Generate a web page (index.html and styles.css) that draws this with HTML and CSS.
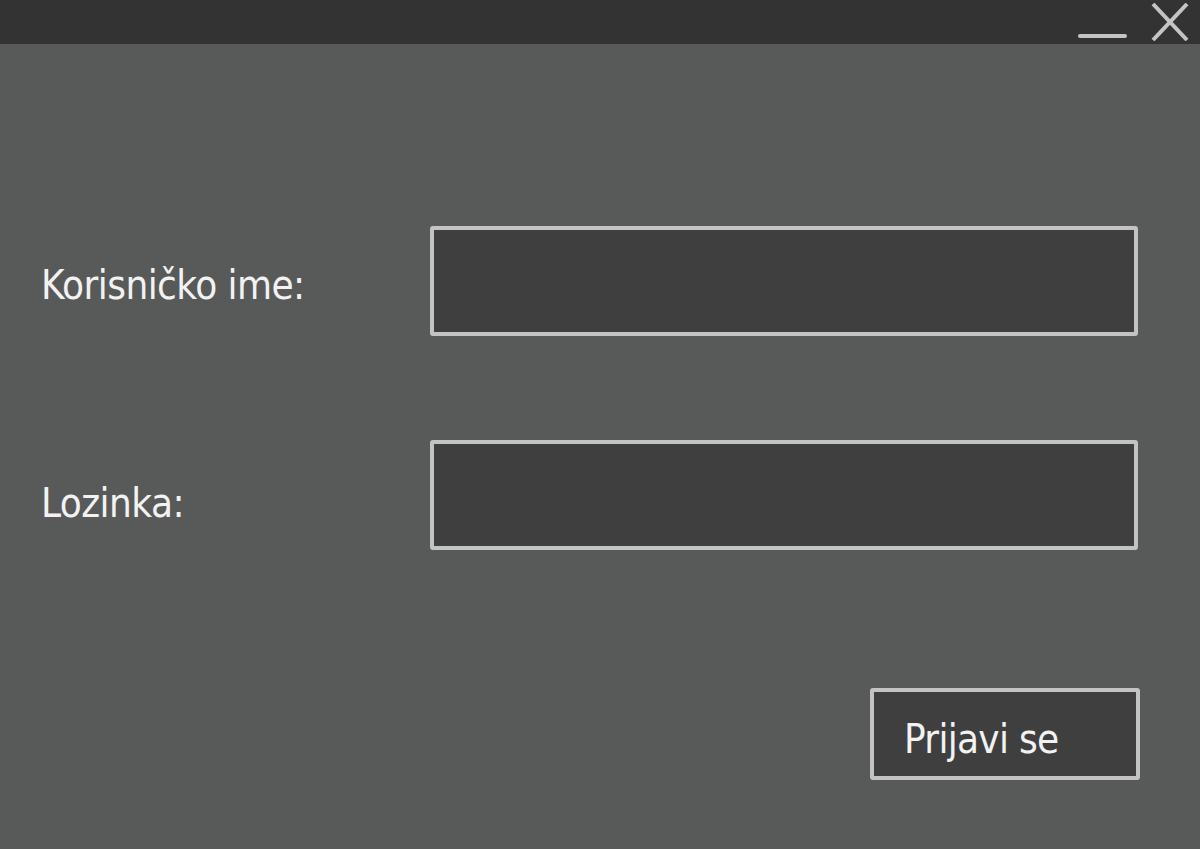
FILE: index.html
```html
<!DOCTYPE html>
<html lang="hr">
<head>
<meta charset="utf-8">
<title>Prijava</title>
<link rel="stylesheet" href="styles.css">
</head>
<body>
<div class="window">
  <header class="titlebar">
    <button class="tb-btn tb-min" aria-label="Minimiziraj"><span class="min-line"></span></button>
    <button class="tb-btn tb-close" aria-label="Zatvori">
      <svg width="38" height="38" viewBox="0 0 38 38"><path d="M2 1 L36 37 M36 1 L2 37" stroke="#c4c4c4" stroke-width="4" fill="none"/></svg>
    </button>
  </header>
  <main class="content">
    <div class="row row-user">
      <label class="label" for="user">Korisničko ime:</label>
      <input class="field" id="user" type="text">
    </div>
    <div class="row row-pass">
      <label class="label" for="pass">Lozinka:</label>
      <input class="field" id="pass" type="password">
    </div>
    <div class="actions">
      <button class="submit">Prijavi se</button>
    </div>
  </main>
</div>
</body>
</html>
```
FILE: styles.css
```css
* { box-sizing: border-box; }
html, body { margin: 0; padding: 0; }
body {
  width: 1200px;
  height: 849px;
  overflow: hidden;
  background: #585a59;
  font-family: "DejaVu Sans Condensed", "DejaVu Sans", sans-serif;
  color: #f2f2f2;
}
.window { display: flex; flex-direction: column; height: 849px; }
.titlebar {
  height: 44px;
  background: #333333;
  display: flex;
  justify-content: flex-end;
  align-items: flex-start;
  padding-right: 11px;
}
.tb-btn {
  background: none;
  border: 0;
  padding: 0;
  display: block;
}
.tb-min {
  width: 49px;
  height: 44px;
  display: flex;
  align-items: flex-end;
  padding-bottom: 6px;
  margin-right: 24px;
}
.min-line {
  display: block;
  width: 49px;
  height: 4px;
  border-radius: 2px;
  background: #c4c4c4;
}
.tb-close {
  width: 38px;
  height: 38px;
  margin-top: 3px;
}
.tb-close svg { display: block; }
.content {
  flex: 1;
  padding: 182px 62px 0 41px;
  display: flex;
  flex-direction: column;
}
.row {
  display: flex;
  align-items: center;
  justify-content: space-between;
  height: 110px;
}
.row-pass { margin-top: 104px; }
.label {
  font-size: 40px;
  letter-spacing: -0.55px;
  padding-top: 8px;
}
.row-pass .label { padding-top: 16px; }
.field {
  width: 708px;
  height: 110px;
  background: #3f3f3f;
  border: 4px solid #c3c3c3;
  border-radius: 3px;
  outline: none;
  color: #f2f2f2;
  font: inherit;
}
.actions {
  display: flex;
  justify-content: flex-end;
  margin-top: 138px;
  margin-right: -2px;
}
.submit {
  width: 270px;
  height: 92px;
  background: #3f3f3f;
  border: 4px solid #c3c3c3;
  border-radius: 3px;
  color: #f2f2f2;
  font-family: inherit;
  font-size: 40px;
  letter-spacing: -0.7px;
  text-align: left;
  padding: 10px 0 0 30px;
}
```
